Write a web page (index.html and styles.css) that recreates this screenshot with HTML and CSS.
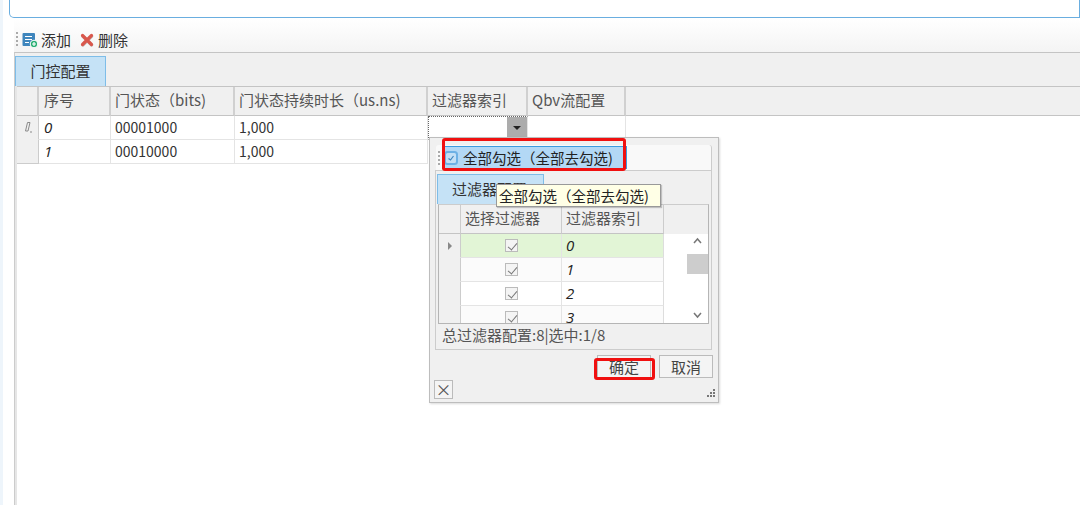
FILE: index.html
```html
<!DOCTYPE html>
<html lang="zh-CN">
<head>
	<meta charset="UTF-8">
	<title>门控配置</title>
	<link rel="stylesheet" href="styles.css">
</head>
<body>
	<div class="top-box"></div>
	<div class="content">
		<div class="toolbar">
			<span class="grip"></span>
			<svg class="tool-icon" width="16" height="16" viewBox="0 0 16 16">
				<path d="M1.5 1h10.5a1 1 0 0 1 1 1v12H1.5a1 1 0 0 1-1-1V2a1 1 0 0 1 1-1z" fill="#3f86bd"/>
				<path d="M3 4.5h7M3 7.5h7M3 10.5h4" stroke="#fff" stroke-width="1.2"/>
				<circle cx="12" cy="12" r="3.8" fill="#27ae72" stroke="#fff"/>
				<path d="M10 12h4M12 10v4" stroke="#fff" stroke-width="1.2"/>
			</svg>
			<span class="tool-label">添加</span>
			<svg class="tool-icon del-icon" width="14" height="14" viewBox="0 0 14 14">
				<path d="M3 3.4l8.5 8.5M11.5 3.4L3 11.9" stroke="#bbb" stroke-width="3.4" stroke-linecap="round"/>
				<path d="M2.5 2.5l9 9M11.5 2.5l-9 9" stroke="#d9574c" stroke-width="3.2" stroke-linecap="round"/>
			</svg>
			<span class="tool-label">删除</span>
		</div>
		<div class="tabs"><div class="tab">门控配置</div></div>
		<div class="grid main-grid">
			<div class="row head">
				<div class="cell rh"></div>
				<div class="cell">序号</div>
				<div class="cell">门状态（bits)</div>
				<div class="cell">门状态持续时长（us.ns)</div>
				<div class="cell">过滤器索引</div>
				<div class="cell">Qbv流配置</div>
				<div class="cell rest"></div>
			</div>
			<div class="row">
				<div class="cell rh"><svg width="10" height="13" viewBox="0 0 10 13"><path d="M4.5 1.5h2.5L5 10H2.5zM7 11h2" fill="none" stroke="#8a8a8a"/></svg></div>
				<div class="cell num">0</div>
				<div class="cell val">00001000</div>
				<div class="cell val">1,000</div>
				<div class="cell editor"><span class="drop-btn"><i></i></span></div>
				<div class="cell"></div>
			</div>
			<div class="row">
				<div class="cell rh"></div>
				<div class="cell num">1</div>
				<div class="cell val">00010000</div>
				<div class="cell val">1,000</div>
				<div class="cell"></div>
				<div class="cell"></div>
			</div>
		</div>
	</div>

	<div class="popup">
		<div class="pop-toolbar">
			<span class="grip small"></span>
			<div class="check-all">
				<svg width="14" height="14" viewBox="0 0 14 14"><rect x="1" y="1" width="12" height="12" rx="2.5" fill="#c4e0f6" stroke="#6db1e5" stroke-width="2"/><path d="M4.5 7.5l2 1.5 3-4" fill="none" stroke="#3f86bd" stroke-width="1.2"/></svg>
				<span>全部勾选（全部去勾选)</span>
			</div>
		</div>
		<div class="pop-panel">
			<div class="tab pop-tab">过滤器配置</div>
			<div class="grid pop-grid">
				<div class="row head">
					<div class="cell rh"></div>
					<div class="cell">选择过滤器</div>
					<div class="cell">过滤器索引</div>
				</div>
				<div class="row current">
					<div class="cell rh"><i class="row-arrow"></i></div>
					<div class="cell chk"><span class="box"></span></div>
					<div class="cell num">0</div>
				</div>
				<div class="row alt">
					<div class="cell rh"></div>
					<div class="cell chk"><span class="box"></span></div>
					<div class="cell num">1</div>
				</div>
				<div class="row">
					<div class="cell rh"></div>
					<div class="cell chk"><span class="box"></span></div>
					<div class="cell num">2</div>
				</div>
				<div class="row alt">
					<div class="cell rh"></div>
					<div class="cell chk"><span class="box"></span></div>
					<div class="cell num">3</div>
				</div>
				<div class="scrollbar">
					<svg width="21" height="14" viewBox="0 0 21 14"><path d="M7 9l3.5-4L14 9" fill="none" stroke="#777" stroke-width="1.5"/></svg>
					<div class="thumb"></div>
					<svg class="down" width="21" height="14" viewBox="0 0 21 14"><path d="M7 5l3.5 4L14 5" fill="none" stroke="#777" stroke-width="1.5"/></svg>
				</div>
			</div>
			<div class="pop-status">总过滤器配置:8|选中:1/8</div>
		</div>
		<div class="pop-actions">
			<button class="btn">确定</button>
			<button class="btn">取消</button>
		</div>
		<div class="pop-bottom">
			<span class="close-btn">×</span>
			<svg class="resize" width="10" height="10" viewBox="0 0 10 10"><path d="M7 1h2v2H7zM4 4h2v2H4zM7 4h2v2H7zM1 7h2v2H1zM4 7h2v2H4zM7 7h2v2H7z" fill="#777"/></svg>
		</div>
	</div>

	<div class="tooltip">全部勾选（全部去勾选)</div>
	<div class="red-box red-top"></div>
	<div class="red-box red-ok"></div>
</body>
</html>
```

FILE: styles.css
```css
* {
	box-sizing: border-box;
}
body {
	margin: 0;
	height: 505px;
	overflow: hidden;
	background: #fff;
	color: #333;
	font-family: "Noto Sans CJK SC", "Noto Sans", sans-serif;
	font-size: 15px;
	border-left: 3px solid #eef5fb;
}
.top-box {
	height: 18px;
	margin-left: 6px;
	border: 1px solid #6aaee0;
	border-top: 0;
	border-radius: 0 0 0 5px;
}
.content {
	height: 487px;
	margin-left: 11px;
}
.toolbar {
	height: 34px;
	display: flex;
	align-items: center;
	padding: 9px 0 0 2px;
	background: linear-gradient(#fff, #f4f4f4);
}
.grip {
	width: 2px;
	height: 16px;
	margin-right: 3px;
	background: repeating-linear-gradient(#aaa 0 2px, transparent 2px 4px);
}
.tool-icon {
	margin-right: 3px;
	margin-left: 1px;
}
.del-icon {
	margin-left: 9px;
	margin-right: 4px;
}
.tool-label {
	line-height: 25px;
}
.tabs {
	height: 34px;
	padding-top: 3px;
	border-top: 1px solid #c4c4c4;
	border-left: 1px solid #ccc;
	background: #f0f0f0;
}
.tab {
	width: 91px;
	height: 30px;
	line-height: 28px;
	text-align: center;
	background: #c5e2f6;
	border: 1px solid #7ebde8;
	border-bottom: 0;
}
.main-grid {
	height: 419px;
	margin-left: 2px;
	border-left: 1px solid #bbb;
	position: relative;
}
.main-grid::before {
	content: "";
	position: absolute;
	left: -3px;
	top: 0;
	bottom: 0;
	width: 2px;
	background: #e6e6e6;
	border-left: 1px solid #ccc;
}
.row {
	display: flex;
	height: 24px;
	background: #fff;
}
.cell {
	flex: none;
	height: 100%;
	padding-left: 4px;
	line-height: 23px;
	white-space: nowrap;
	overflow: hidden;
	border-right: 1px solid #e4e4e4;
	border-bottom: 1px solid #e4e4e4;
}
.val {
	font-size: 14px;
}
.main-grid .cell:nth-child(1) { width: 22px; }
.main-grid .cell:nth-child(2) { width: 72px; padding-left: 5px; }
.main-grid .cell:nth-child(3) { width: 124px; }
.main-grid .cell:nth-child(4) { width: 193px; }
.main-grid .cell:nth-child(5) { width: 100px; }
.main-grid .cell:nth-child(6) { width: 98px; }
.main-grid .cell.rest {
	flex: 1;
	border-right: 0;
}
.head {
	height: 30px;
	background: #f0f0f0;
	border-top: 1px solid #c4c4c4;
}
.head .cell {
	line-height: 26px;
	color: #555;
	border-right: 2px solid #d0d0d0;
	border-bottom: 1px solid #c4c4c4;
}
.main-grid .row:not(.head) .cell:nth-child(n+5) {
	border-bottom-color: #eee;
}
.main-grid .row:nth-child(3) .cell:nth-child(n+5) {
	border-bottom-color: transparent;
	border-right-color: transparent;
}
.rh {
	background: #f0f0f0;
	padding: 0;
	display: flex;
	align-items: center;
	justify-content: center;
	border-right: 1px solid #ccc;
	border-bottom-color: #f0f0f0;
}
.main-grid .row:nth-child(3) .rh {
	border-bottom-color: #ccc;
}
.num {
	font-size: 15px;
	font-style: italic;
	font-family: "Open Sans", sans-serif;
	color: #222;
}
.editor {
	position: relative;
	border-top: 1px dotted #666;
	border-left: 1px dotted #666;
	border-bottom: 1px dotted #666;
	background: #fff;
}
.drop-btn {
	position: absolute;
	right: 0;
	top: 0;
	bottom: 0;
	width: 20px;
	background: #acacac;
	display: flex;
	align-items: center;
	justify-content: center;
}
.drop-btn i {
	border: 4px solid transparent;
	border-top: 4px solid #222;
	border-bottom: 0;
}
.popup {
	position: absolute;
	left: 429px;
	top: 137px;
	width: 290px;
	height: 266px;
	padding: 7px 6px 0 5px;
	background: #f0f0f0;
	border: 1px solid #bdbdbd;
	box-shadow: 1px 1px 2px rgba(0, 0, 0, 0.15);
}
.pop-toolbar {
	height: 25px;
	margin-left: 1px;
	width: 276px;
	display: flex;
	align-items: center;
	background: #f9f9f9;
	border-radius: 3px 3px 0 0;
	border-right: 1px solid #ccc;
}
.grip.small {
	height: 14px;
	margin: 0 2px 0 2px;
}
.check-all {
	width: 185px;
	height: 23px;
	display: flex;
	align-items: center;
	gap: 5px;
	padding-left: 1px;
	font-size: 14.5px;
	background: #b3d8f5;
	border: 1px solid #3d9be0;
	color: #222;
	line-height: 21px;
}
.pop-panel {
	height: 180px;
	border: 1px solid #ccc;
	padding: 3px 2px 0 2px;
}
.pop-tab {
	width: 107px;
	height: 30px;
	margin-left: -1px;
	padding-left: 14px;
	text-align: left;
}
.pop-grid {
	position: relative;
	height: 120px;
	width: 271px;
	overflow: hidden;
	background: #fff;
	border: 1px solid #b5b5b5;
	border-top: 1px solid #ccc;
}
.pop-grid .cell:nth-child(1) { width: 22px; }
.pop-grid .cell:nth-child(2) { width: 101px; }
.pop-grid .cell:nth-child(3) { width: 102px; border-right: 1px solid #ddd; }
.pop-grid .head {
	border-top: 0;
	height: 29px;
}
.pop-grid .head .cell {
	border-right-width: 1px;
	border-right-color: #ccc;
	line-height: 25px;
}
.pop-grid .num {
	line-height: 22px;
}
.pop-grid .current .cell:not(.rh) {
	background: #e2f5d6;
}
.pop-grid .alt .cell:not(.rh) {
	background: #fbfbfb;
}
.chk {
	display: flex;
	align-items: center;
	justify-content: center;
	padding: 0;
}
.box {
	width: 13px;
	height: 13px;
	border: 1px solid #bbb;
	background: #f4f4f4;
	position: relative;
}
.box::after {
	content: "";
	position: absolute;
	left: 4px;
	top: 1px;
	width: 4px;
	height: 8px;
	border-right: 1px solid #777;
	border-bottom: 1px solid #777;
	transform: rotate(40deg);
}
.row-arrow {
	border: 4px solid transparent;
	border-left: 4px solid #888;
	border-right: 0;
}
.scrollbar {
	position: absolute;
	right: 0;
	top: 29px;
	bottom: 0;
	width: 21px;
	background: #fff;
	display: flex;
	flex-direction: column;
}
.thumb {
	height: 20px;
	margin-top: 6px;
	background: #cdcdcd;
}
.scrollbar .down {
	margin-top: auto;
	margin-bottom: 1px;
}
.pop-status {
	height: 24px;
	line-height: 21px;
	padding-left: 4px;
	color: #555;
}
.pop-actions {
	display: flex;
	justify-content: flex-end;
	gap: 8px;
	margin-top: 5px;
	margin-right: -1px;
	height: 23px;
}
.btn {
	width: 54px;
	height: 23px;
	padding: 0;
	font: inherit;
	line-height: 20px;
	color: #444;
	background: #f4f4f4;
	border: 1px solid #bbb;
}
.pop-bottom {
	display: flex;
	justify-content: space-between;
	align-items: flex-end;
	margin: 2px -4px 0 -1px;
}
.close-btn {
	width: 19px;
	height: 19px;
	line-height: 16px;
	text-align: center;
	font-size: 16px;
	color: #555;
	background: #f4f4f4;
	border: 1px solid #bbb;
}
.resize {
	margin-bottom: 1px;
}
.tooltip {
	position: absolute;
	left: 496px;
	top: 184px;
	width: 165px;
	height: 23px;
	padding-left: 2px;
	font-size: 14.5px;
	line-height: 21px;
	background: #ffffe6;
	border: 1px solid #999;
	color: #222;
	white-space: nowrap;
	box-shadow: 1px 1px 1px rgba(0, 0, 0, 0.2);
}
.red-box {
	position: absolute;
	border: 3px solid #f01010;
	border-radius: 3px;
}
.red-top {
	left: 442px;
	top: 138px;
	width: 184px;
	height: 33px;
}
.red-ok {
	left: 594px;
	top: 358px;
	width: 61px;
	height: 22px;
}
```
